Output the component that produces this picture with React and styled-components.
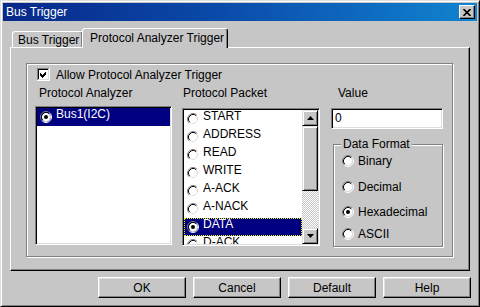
import React from 'react'
import styled, { createGlobalStyle } from 'styled-components'

const face = '#c6c6c6'
const navy = '#000080'

const GlobalStyle = createGlobalStyle`
  html, body { margin: 0; padding: 0; background: ${face}; }
  body {
    font-family: "Liberation Sans", Arial, sans-serif;
    font-size: 12px;
    color: #000;
  }
  * { box-sizing: border-box; }
`

const Window = styled.div`
  width: 480px;
  height: 307px;
  background: ${face};
  display: flex;
  flex-direction: column;
  border: 1px solid;
  border-color: #dfdfdf #000 #000 #dfdfdf;
  box-shadow: inset 1px 1px #fff, inset -1px -1px #808080;
  padding: 2px;
`

const TitleBar = styled.div`
  height: 18px;
  display: flex;
  align-items: center;
  padding-left: 3px;
  color: #fff;
  background: linear-gradient(90deg, #08288a 0%, #0a4aa8 45%, #1084d0 100%);
`

const CloseButton = styled.div`
  margin-left: auto;
  margin-right: 2px;
  width: 16px;
  height: 14px;
  display: flex;
  align-items: center;
  justify-content: center;
  background: ${face};
  border: 1px solid;
  border-color: #fff #000 #000 #fff;
  box-shadow: inset -1px -1px #808080;
`

const Body = styled.div`
  flex: 1;
  padding: 7px 7px 0 7px;
  display: flex;
  flex-direction: column;
`

const TabRow = styled.div`
  height: 19px;
  display: flex;
  align-items: flex-end;
  padding-left: 2px;
`

const Tab = styled.div`
  position: relative;
  width: ${p => (p.$active ? 146 : 71)}px;
  height: ${p => (p.$active ? 20 : 16)}px;
  margin-left: ${p => (p.$active ? -1 : 0)}px;
  margin-bottom: ${p => (p.$active ? -1 : 0)}px;
  z-index: ${p => (p.$active ? 1 : 0)};
  padding-left: ${p => (p.$active ? 7 : 5)}px;
  padding-bottom: ${p => (p.$active ? 2 : 0)}px;
  display: flex;
  align-items: center;
  background: ${face};
  border: 1px solid;
  border-bottom: none;
  border-color: #fff #000 transparent #fff;
  border-radius: 3px 3px 0 0;
  box-shadow: inset -1px 0 #808080;
  white-space: nowrap;
`

const Panel = styled.div`
  width: 460px;
  height: 224px;
  border: 1px solid;
  border-color: #fff #000 #000 #fff;
  box-shadow: inset -1px -1px #808080;
  padding: 15px 0 0 15px;
`

const GroupBox = styled.div`
  width: 427px;
  height: 194px;
  border: 1px solid #808080;
  box-shadow: inset 1px 1px #fff, 1px 1px #fff;
  padding: 4px 0 0 8px;
`

const CheckRow = styled.div`
  display: flex;
  align-items: center;
  height: 13px;
  padding-left: 2px;
  gap: 6px;
  white-space: nowrap;
`

const Columns = styled.div`
  display: flex;
  margin-top: 5px;
`

const Column = styled.div`
  width: ${p => p.$w}px;
  margin-left: ${p => p.$ml || 0}px;
  display: flex;
  flex-direction: column;
`

const Label = styled.div`
  height: 14px;
  line-height: 14px;
  padding-left: ${p => p.$indent}px;
  white-space: nowrap;
`

const ListBox = styled.div`
  margin-top: ${p => p.$mt}px;
  height: ${p => p.$h}px;
  background: #fff;
  border: 1px solid;
  border-color: #808080 #fff #fff #808080;
  box-shadow: inset 1px 1px #000, inset -1px -1px #dfdfdf;
  padding: 1px;
  display: flex;
  overflow: hidden;
`

const Items = styled.div`
  flex: 1;
  display: flex;
  flex-direction: column;
  overflow: hidden;
`

const Item = styled.div`
  flex: none;
  height: 18px;
  display: flex;
  align-items: flex-start;
  padding-left: 3px;
  gap: 4px;
  line-height: 12px;
  white-space: nowrap;
  background: ${p => (p.$selected ? navy : 'transparent')};
  color: ${p => (p.$selected ? '#fff' : '#000')};
  outline: ${p => (p.$focused ? '1px dotted #f0f000' : 'none')};
  outline-offset: -1px;
  > svg { margin-top: 3px; flex: none; }
  > span { margin-top: 0; }
`

const ScrollBar = styled.div`
  width: 16px;
  display: flex;
  flex-direction: column;
`

const Raised = styled.div`
  flex: none;
  height: ${p => p.$h}px;
  display: flex;
  align-items: center;
  justify-content: center;
  background: ${face};
  border: 1px solid;
  border-color: #dfdfdf #000 #000 #dfdfdf;
  box-shadow: inset 1px 1px #fff, inset -1px -1px #808080;
`

const Track = styled.div`
  flex: 1;
  background: repeating-conic-gradient(#fff 0 25%, ${face} 0 50%) 0 0 / 2px 2px;
`

const TextInput = styled.div`
  margin-top: 8px;
  height: 21px;
  background: #fff;
  border: 1px solid;
  border-color: #808080 #fff #fff #808080;
  box-shadow: inset 1px 1px #000, inset -1px -1px #dfdfdf;
  padding-left: 3px;
  line-height: 19px;
`

const Frame = styled.div`
  position: relative;
  margin-top: 15px;
  margin-left: 2px;
  width: 110px;
  height: 103px;
  border: 1px solid #808080;
  box-shadow: inset 1px 1px #fff, 1px 1px #fff;
  padding-left: 8px;
`

const Legend = styled.span`
  position: absolute;
  top: -8px;
  left: 7px;
  padding: 0 2px;
  background: ${face};
  line-height: 14px;
  white-space: nowrap;
`

const Option = styled.div`
  margin-top: ${p => p.$mt}px;
  height: 14px;
  display: flex;
  align-items: center;
  gap: 4px;
  white-space: nowrap;
`

const ButtonRow = styled.div`
  display: flex;
  justify-content: flex-end;
  gap: 7px;
  margin-top: 6px;
  margin-right: -1px;
`

const Button = styled.div`
  width: 88px;
  height: 21px;
  display: flex;
  align-items: center;
  justify-content: center;
  background: ${face};
  border: 1px solid;
  border-color: #fff #000 #000 #fff;
  box-shadow: inset -1px -1px #808080, inset 1px 1px #dfdfdf;
`

function Radio({ checked }) {
  const a = 3.89
  const b = 3.18
  return (
    <svg width="12" height="12" viewBox="0 0 12 12">
      <circle cx="6" cy="6" r="4.2" fill="#fff" />
      <path d={`M${6 - a} ${6 + a}A5.5 5.5 0 0 1 ${6 + a} ${6 - a}`} stroke="#808080" fill="none" />
      <path d={`M${6 + a} ${6 - a}A5.5 5.5 0 0 1 ${6 - a} ${6 + a}`} stroke="#fff" fill="none" />
      <path d={`M${6 - b} ${6 + b}A4.5 4.5 0 0 1 ${6 + b} ${6 - b}`} stroke="#000" fill="none" />
      <path d={`M${6 + b} ${6 - b}A4.5 4.5 0 0 1 ${6 - b} ${6 + b}`} stroke="#dfdfdf" fill="none" />
      {checked && <circle cx="6" cy="6" r="2" fill="#000" />}
    </svg>
  )
}

function CheckBox() {
  return (
    <svg width="13" height="13" viewBox="0 0 13 13" shapeRendering="crispEdges">
      <rect x="0" y="0" width="13" height="13" fill="#fff" />
      <path d="M0 12.5V0.5H12.5" stroke="#808080" fill="none" />
      <path d="M1 11.5V1.5H11.5" stroke="#000" fill="none" />
      <path d="M0.5 13V12.5H12.5V0" stroke="#fff" fill="none" />
      <path d="M1.5 12V11.5H11.5V1" stroke="#dfdfdf" fill="none" />
      <path d="M3 5L5 7L9 3V6L5 10L3 8Z" fill="#000" />
    </svg>
  )
}

function Arrow({ down }) {
  return (
    <svg width="7" height="4" viewBox="0 0 7 4">
      <polygon points={down ? '0,0 7,0 3.5,4' : '3.5,0 7,4 0,4'} fill="#000" />
    </svg>
  )
}

const packets = ['START', 'ADDRESS', 'READ', 'WRITE', 'A-ACK', 'A-NACK', 'DATA', 'D-ACK']

const formats = [
  { name: 'Binary', mt: 9 },
  { name: 'Decimal', mt: 12 },
  { name: 'Hexadecimal', mt: 11, checked: true },
  { name: 'ASCII', mt: 8 },
]

export default function App() {
  return (
    <>
      <GlobalStyle />
      <Window>
        <TitleBar>
          <span>Bus Trigger</span>
          <CloseButton>
            <svg width="8" height="7" viewBox="0 0 8 7">
              <path d="M0.5 0L7.5 7M7.5 0L0.5 7" stroke="#000" strokeWidth="1.6" />
            </svg>
          </CloseButton>
        </TitleBar>
        <Body>
          <TabRow>
            <Tab>Bus Trigger</Tab>
            <Tab $active>Protocol Analyzer Trigger</Tab>
          </TabRow>
          <Panel>
            <GroupBox>
              <CheckRow>
                <CheckBox />
                <span>Allow Protocol Analyzer Trigger</span>
              </CheckRow>
              <Columns>
                <Column $w={137}>
                  <Label $indent={4}>Protocol Analyzer</Label>
                  <ListBox $mt={6} $h={139}>
                    <Items>
                      <Item $selected>
                        <Radio checked />
                        <span>Bus1(I2C)</span>
                      </Item>
                    </Items>
                  </ListBox>
                </Column>
                <Column $w={138} $ml={10}>
                  <Label $indent={1}>Protocol Packet</Label>
                  <ListBox $mt={8} $h={138}>
                    <Items>
                      {packets.map(p => (
                        <Item key={p} $selected={p === 'DATA'} $focused={p === 'DATA'}>
                          <Radio checked={p === 'DATA'} />
                          <span>{p}</span>
                        </Item>
                      ))}
                    </Items>
                    <ScrollBar>
                      <Raised $h={16}><Arrow /></Raised>
                      <Raised $h={65} />
                      <Track />
                      <Raised $h={16}><Arrow down /></Raised>
                    </ScrollBar>
                  </ListBox>
                </Column>
                <Column $w={112} $ml={11}>
                  <Label $indent={7}>Value</Label>
                  <TextInput>0</TextInput>
                  <Frame>
                    <Legend>Data Format</Legend>
                    {formats.map(f => (
                      <Option key={f.name} $mt={f.mt}>
                        <Radio checked={f.checked} />
                        <span>{f.name}</span>
                      </Option>
                    ))}
                  </Frame>
                </Column>
              </Columns>
            </GroupBox>
          </Panel>
          <ButtonRow>
            <Button>OK</Button>
            <Button>Cancel</Button>
            <Button>Default</Button>
            <Button>Help</Button>
          </ButtonRow>
        </Body>
      </Window>
    </>
  )
}
